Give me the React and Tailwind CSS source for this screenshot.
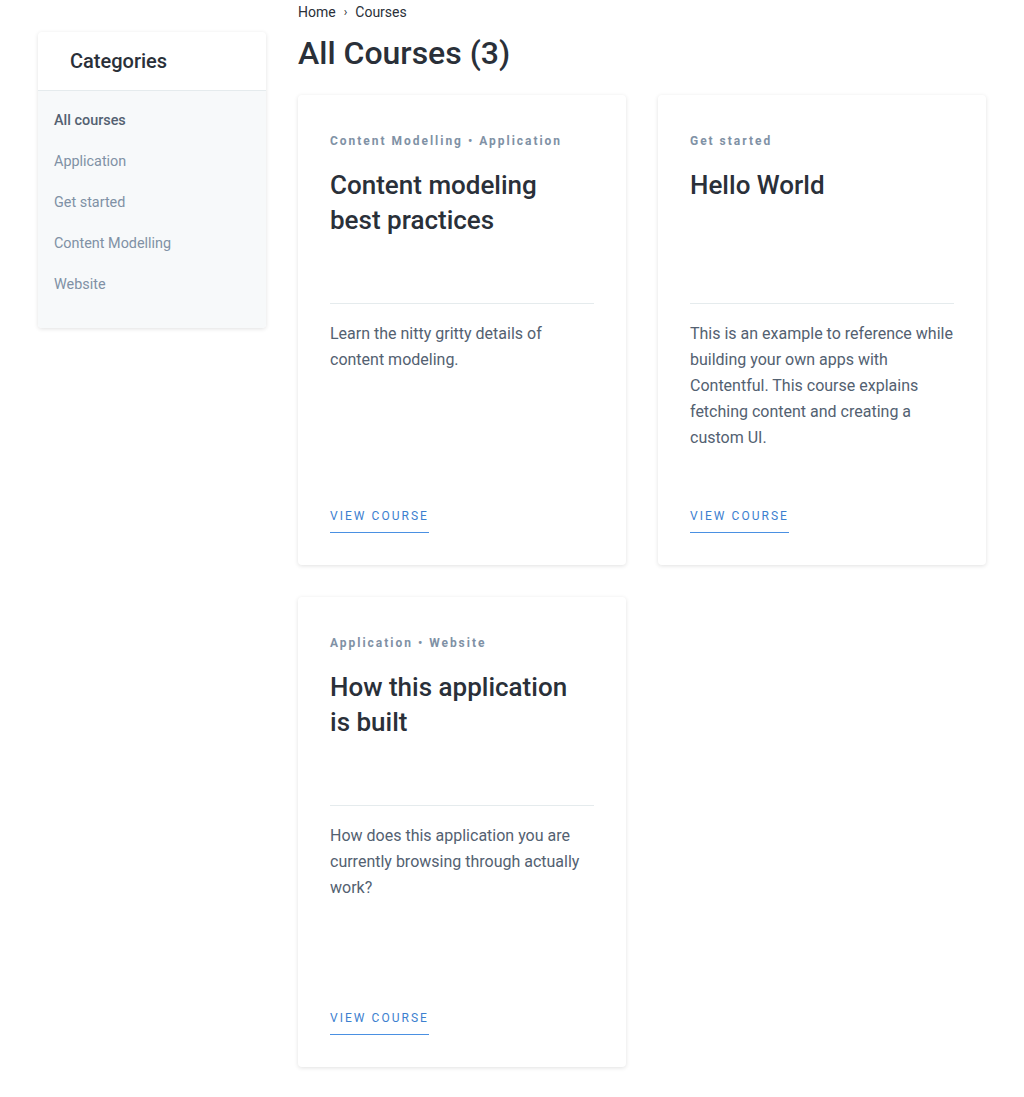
import React from "react";

const categories = [
  { label: "All courses", active: true },
  { label: "Application" },
  { label: "Get started" },
  { label: "Content Modelling" },
  { label: "Website" },
];

const courses = [
  {
    tags: ["Content Modelling", "Application"],
    title: "Content modeling best practices",
    description: "Learn the nitty gritty details of content modeling.",
  },
  {
    tags: ["Get started"],
    title: "Hello World",
    description:
      "This is an example to reference while building your own apps with Contentful. This course explains fetching content and creating a custom UI.",
  },
  {
    tags: ["Application", "Website"],
    title: "How this application is built",
    description:
      "How does this application you are currently browsing through actually work?",
  },
];

function Sidebar() {
  return (
    <aside className="w-[228px] shrink-0 mt-8 self-start bg-white rounded shadow-[0_1px_4px_rgba(0,0,0,0.12)] overflow-hidden">
      <div className="h-[59px] flex items-center px-8 border-b border-[#e5ebed]">
        <h2 className="text-[20px] font-medium text-[#2a3039]">Categories</h2>
      </div>
      <ul className="bg-[#f7f9fa] px-4 pt-[9px] pb-[23px]">
        {categories.map((c) => (
          <li key={c.label}>
            <a
              href="#"
              className={`block py-[10px] text-[14.4px] leading-[21px] ${
                c.active ? "font-medium text-[#536171]" : "text-[#8091a5]"
              }`}
            >
              {c.label}
            </a>
          </li>
        ))}
      </ul>
    </aside>
  );
}

function CourseCard({ course }) {
  return (
    <div className="w-[328px] h-[470px] bg-white rounded shadow-[0_1px_4px_rgba(0,0,0,0.12)] px-8 pt-[37px] pb-8 flex flex-col">
      <div className="h-[171px]">
        <p className="text-[12px] leading-[18px] font-bold tracking-[0.165em] text-[#8091a5]">
          {course.tags.join(" • ")}
        </p>
        <h3 className="mt-[18px] text-[26px] leading-[35px] font-medium text-[#2a3039] pr-6">
          {course.title}
        </h3>
      </div>
      <div className="border-t border-[#e5ebed] pt-[17px] flex-1">
        <p className="text-[16px] leading-[26px] text-[#536171]">
          {course.description}
        </p>
      </div>
      <div>
        <a
          href="#"
          className="inline-block text-[12px] leading-[18px] tracking-[0.17em] text-[#3c80cf] border-b border-[#4a90e2] pb-[7px]"
        >
          VIEW COURSE
        </a>
      </div>
    </div>
  );
}

export default function App() {
  return (
    <div
      className="min-h-[1097px] bg-white px-[38px] flex gap-8"
      style={{ fontFamily: "Roboto, 'Liberation Sans', sans-serif" }}
    >
      <Sidebar />
      <main className="flex-1">
        <nav className="flex items-center gap-2 text-[14px] leading-[21px] text-[#2a3039] pt-[2px]">
          <a href="#">Home</a>
          <span className="text-[12px]">›</span>
          <a href="#">Courses</a>
        </nav>
        <h1 className="mt-[11px] text-[32px] leading-[38px] font-medium text-[#2a3039]">
          All Courses (3)
        </h1>
        <div className="mt-[23px] grid grid-cols-[328px_328px] gap-8 pb-8">
          {courses.map((c) => (
            <CourseCard key={c.title} course={c} />
          ))}
        </div>
      </main>
    </div>
  );
}
